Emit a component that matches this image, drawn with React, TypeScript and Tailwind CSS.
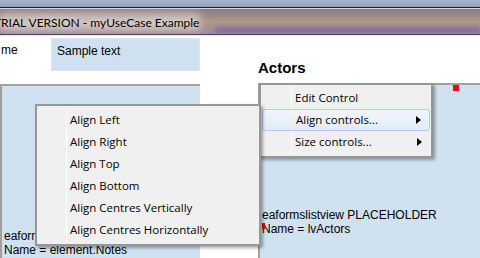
const seg = { fontFamily: '"Open Sans", "Noto Sans", sans-serif' };
const arial = { fontFamily: '"Liberation Sans", Arial, sans-serif' };
const lato = { fontFamily: 'Lato, "Open Sans", sans-serif' };

const alignItems = [
  "Align Left",
  "Align Right",
  "Align Top",
  "Align Bottom",
  "Align Centres Vertically",
  "Align Centres Horizontally",
];

function Arrow() {
  return (
    <svg width="5" height="8" viewBox="0 0 5 8" className="ml-auto mr-[8px]">
      <path d="M0 0 L5 4 L0 8 Z" fill="#000" />
    </svg>
  );
}

export default function App() {
  return (
    <div className="w-[480px] h-[258px] overflow-hidden bg-white relative">
      {/* window title bar */}
      <div className="h-[7px] bg-gradient-to-b from-[#a7b1ca] to-[#95a1bd]" />
      <div className="h-[1px] bg-[#1c1c28]" />
      <div className="h-[1px] bg-[#d8d4dc]" />
      <div className="h-[25px] relative bg-gradient-to-b from-[#847c88] via-[#ad9887] to-[#9b8aa0] flex items-center pt-[2px] overflow-hidden">
        <div className="absolute left-[0px] w-[200px] top-[3px] bottom-[3px] bg-[#ece6e2] opacity-50 blur-[4px]" />
        <div className="absolute left-[215px] right-0 bottom-[1px] h-[6px] bg-[#6e5a9c] opacity-60 blur-[2px]" />
        <span
          className="relative text-[12px] text-black -ml-[6px] leading-none [text-shadow:0_0_6px_rgba(255,255,255,0.8)]"
          style={lato}
        >
          TRIAL VERSION - myUseCase Example
        </span>
      </div>
      <div className="h-[1px] bg-[#4a4550]" />
      <div className="h-[1px] bg-[#e8e8ee]" />

      {/* form canvas */}
      <div className="relative h-[222px] flex">
        {/* left column */}
        <div className="w-[200px] flex flex-col pt-[2px]">
          <div className="flex items-start">
            <span className="w-[51px] pt-[3px] pl-[1px] text-[12px] text-black" style={arial}>
              me
            </span>
            <div className="w-[149px] h-[33px] bg-[#cfe1f0] border border-[#dfe6ee] pl-[5px] pt-[3px] text-[12px] text-black" style={arial}>
              Sample text
            </div>
          </div>
          <div className="mt-[13px] h-[180px] bg-[#d0e2f0] border-t-2 border-l-2 border-[#a0a0a0] pl-[2px] pt-[143px] text-[12px] leading-[14px] text-black" style={arial}>
            <div>eaformslistview</div>
            <div>Name = element.Notes</div>
          </div>
        </div>

        {/* right column */}
        <div className="ml-[58px] flex-1 flex flex-col pt-[23px]">
          <div className="h-[18px] leading-[18px] text-[15px] font-bold text-black" style={arial}>
            Actors
          </div>
          <div className="relative mt-[6px] h-[180px] bg-[#d0e2f0] border-t-2 border-l-2 border-[#a0a0a0] pl-[2px] pt-[123px] text-[12px] leading-[14px] text-black" style={arial}>
            <div className="absolute left-[193px] top-0 w-[6px] h-[6px] bg-[#ff0000]" />
            <div className="absolute left-[2px] top-[138px] w-[3px] h-[6px] bg-[#e00000]" />
            <div>eaformslistview PLACEHOLDER</div>
            <div>Name = lvActors</div>
          </div>
        </div>

        {/* main context menu */}
        <div
          className="absolute left-[259px] top-[47px] w-[174px] pt-[2px] pb-[3px] bg-[#f0f0f0] border-2 border-[#979797] shadow-[2px_2px_3px_rgba(0,0,0,0.35)] text-[11.5px] text-black"
          style={seg}
        >
          <div className="absolute left-[30px] top-[2px] bottom-[2px] w-[1px] bg-[#e2e3e3] border-r border-white" />
          <div className="relative h-[22px] flex items-center pl-[34px]">Edit Control</div>
          <div className="relative h-[22px] mx-[1px] flex items-center pl-[33px] rounded-[3px] border border-[#aeccf2] bg-gradient-to-b from-[#f2f6fc] to-[#e2ebf8]">
            Align controls...
            <Arrow />
          </div>
          <div className="relative h-[22px] flex items-center pl-[34px] pr-[1px]">
            Size controls...
            <Arrow />
          </div>
        </div>

        {/* align submenu */}
        <div
          className="absolute left-[35px] top-[68px] w-[226px] py-[3px] bg-[#f0f0f0] border-2 border-[#979797] shadow-[2px_2px_3px_rgba(0,0,0,0.35)] text-[11.5px] text-black"
          style={seg}
        >
          <div className="absolute left-[29px] top-[2px] bottom-[2px] w-[1px] bg-[#e2e3e3] border-r border-white" />
          {alignItems.map((label) => (
            <div key={label} className="relative h-[22px] flex items-center pl-[33px]">
              {label}
            </div>
          ))}
        </div>
      </div>
    </div>
  );
}
